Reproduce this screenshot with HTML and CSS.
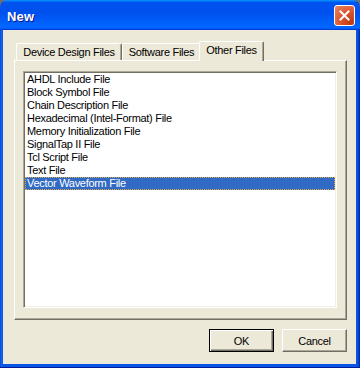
FILE: index.html
```html
<!DOCTYPE html>
<html>
<head>
<meta charset="utf-8">
<link rel="stylesheet" href="styles.css">
</head>
<body>
<div class="window">
  <div class="titlebar">
    <span class="title">New</span>
    <button class="close" aria-label="Close">
      <svg width="11" height="11" viewBox="0 0 11 11"><path d="M1.5 1.5 L9.5 9.5 M9.5 1.5 L1.5 9.5" stroke="#fff" stroke-width="2" stroke-linecap="square" fill="none"/></svg>
    </button>
  </div>
  <div class="frame">
    <div class="client">
      <div class="tabs">
        <div class="tab tab-device">Device Design Files</div>
        <div class="tab tab-software">Software Files</div>
        <div class="tab tab-other active">Other Files</div>
      </div>
      <div class="panel">
        <div class="listbox">
          <div class="item">AHDL Include File</div>
          <div class="item">Block Symbol File</div>
          <div class="item">Chain Description File</div>
          <div class="item">Hexadecimal (Intel-Format) File</div>
          <div class="item">Memory Initialization File</div>
          <div class="item">SignalTap II File</div>
          <div class="item">Tcl Script File</div>
          <div class="item">Text File</div>
          <div class="item selected">Vector Waveform File</div>
        </div>
      </div>
      <div class="buttons">
        <button class="btn default">OK</button>
        <button class="btn">Cancel</button>
      </div>
    </div>
  </div>
</div>
</body>
</html>
```

FILE: styles.css
```css
html, body {
  margin: 0;
  padding: 0;
  background: #6f6f6f;
}

.window {
  width: 360px;
  height: 368px;
  display: flex;
  flex-direction: column;
  font-family: "Liberation Sans", Arial, sans-serif;
  font-size: 11px;
  letter-spacing: -0.3px;
  color: #000;
}

.titlebar {
  height: 30px;
  box-sizing: border-box;
  display: flex;
  align-items: flex-start;
  justify-content: space-between;
  padding: 5px 5px 0 7px;
  border-radius: 7px 7px 0 0;
  background: linear-gradient(180deg, #0997ff, #0053ee 8%, #0050ee 40%, #0066ff 88%, #0066ff 93%, #005bff 95%, #003dd7 96%, #003dd7);
}

.title {
  margin-top: 4px;
  font-family: "Liberation Sans", Arial, sans-serif;
  font-weight: bold;
  font-size: 13px;
  line-height: 15px;
  color: #fff;
  text-shadow: 1px 1px #0f1089;
  letter-spacing: 0.2px;
}

.close {
  width: 21px;
  height: 21px;
  box-sizing: border-box;
  padding: 0;
  border: 1px solid #fff;
  border-radius: 3px;
  background: radial-gradient(circle at 85% 85%, #c23a14 0, #d9552e 45%, #e2704b 75%, #e88462 100%);
  display: flex;
  align-items: center;
  justify-content: center;
}

.frame {
  flex: 1;
  display: flex;
  padding: 0 4px 4px 3px;
  background: linear-gradient(90deg, #0831d9 0, #166aee 1px, #0a55e6 3px, #0a55e6 calc(100% - 4px), #0751e0 calc(100% - 2px), #001ea0 100%);
  box-shadow: inset 0 -1px #001c98;
}

.client {
  flex: 1;
  display: flex;
  flex-direction: column;
  background: #ece9d8;
  padding: 11px 9px 12px 11px;
}

.tabs {
  height: 19px;
  display: flex;
  align-items: flex-end;
  padding-left: 2px;
}

.tab {
  box-sizing: border-box;
  height: 17px;
  padding: 2px 0 1px;
  line-height: 13px;
  text-align: center;
  white-space: nowrap;
  background: #ece9d8;
  border-top: 1px solid #fff;
  border-left: 1px solid #fff;
  border-right: 1px solid #716f64;
  border-radius: 2px 2px 0 0;
  box-shadow: inset -1px 0 #aca899;
}

.tab-device { width: 106px; }
.tab-software { width: 79px; }

.tab.active {
  position: relative;
  z-index: 1;
  width: 65px;
  height: 20px;
  margin-left: -2px;
  margin-bottom: -1px;
  padding: 2px 0 4px;
}

.panel {
  box-sizing: border-box;
  height: 260px;
  display: flex;
  padding: 10px 9px 11px 8px;
  border-top: 1px solid #fff;
  border-left: 1px solid #fff;
  border-right: 1px solid #716f64;
  border-bottom: 1px solid #716f64;
  box-shadow: inset -1px -1px #aca899;
}

.listbox {
  flex: 1;
  background: #fff;
  border: 1px solid;
  border-color: #aca899 #fff #fff #aca899;
  box-shadow: inset 1px 1px #716f64, inset -1px -1px #f1efe2;
  padding: 1px;
}

.item {
  box-sizing: border-box;
  height: 13px;
  line-height: 13px;
  padding-left: 2px;
  white-space: nowrap;
}

.item.selected {
  background: #316ac5;
  color: #fff;
  border: 1px dotted #e0a64a;
  line-height: 11px;
  padding-left: 1px;
}

.buttons {
  margin-top: 9px;
  display: flex;
  justify-content: flex-end;
  gap: 8px;
}

.btn {
  box-sizing: border-box;
  width: 65px;
  height: 23px;
  padding: 0;
  font-family: "Liberation Sans", Arial, sans-serif;
  font-size: 11px;
  letter-spacing: -0.3px;
  color: #000;
  background: #ece9d8;
  border: 1px solid;
  border-color: #fff #716f64 #716f64 #fff;
  box-shadow: inset -1px -1px #aca899;
}

.btn.default {
  border-color: #000;
  box-shadow: inset 1px 1px #fff, inset -1px -1px #716f64, inset -2px -2px #aca899;
}
```
